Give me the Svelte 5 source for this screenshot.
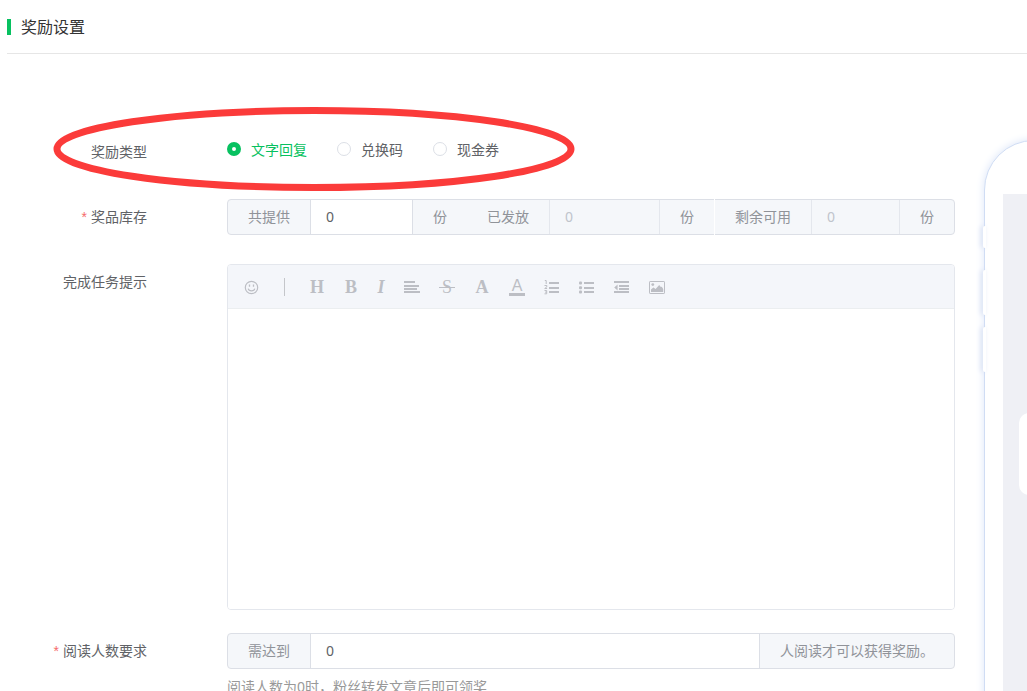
<script>
  let rewardType = $state('text');
  let total = $state('0');
  let readers = $state('0');
  let tip = $state('');
  const sent = '0';
  const left = '0';

  const types = [
    { value: 'text', label: '文字回复' },
    { value: 'code', label: '兑换码' },
    { value: 'cash', label: '现金券' }
  ];
</script>

<div class="page">
  <header class="page-header">
    <h1>奖励设置</h1>
  </header>

  <div class="main">
    <form class="form">
      <div class="row">
        <span class="label" id="type-label">奖励类型</span>
        <div class="radios" role="radiogroup" aria-labelledby="type-label">
          {#each types as t}
            <label class="radio" class:checked={rewardType === t.value}>
              <input type="radio" name="type" value={t.value} bind:group={rewardType} />
              {t.label}
            </label>
          {/each}
        </div>
        <svg class="mark" width="522" height="84" viewBox="0 0 522 84" aria-hidden="true">
          <ellipse cx="261" cy="42" rx="257" ry="38.5" fill="none" stroke="#fb3b3a" stroke-width="7" />
        </svg>
      </div>

      <div class="row">
        <label class="label required" for="total">奖品库存</label>
        <div class="group">
          <span class="addon">共提供</span>
          <input class="total" id="total" type="text" bind:value={total} />
          <span class="addon">份</span>
          <label class="addon" for="sent">已发放</label>
          <input class="sent" id="sent" type="text" value={sent} disabled />
          <span class="addon">份</span>
          <label class="addon split" for="left">剩余可用</label>
          <input class="left" id="left" type="text" value={left} disabled />
          <span class="addon">份</span>
        </div>
      </div>

      <div class="row editor-row">
        <label class="label" for="tip">完成任务提示</label>
        <div class="editor">
          <div class="toolbar">
            <button type="button" aria-label="表情">
              <svg width="16" height="16" viewBox="0 0 16 16" fill="none" stroke="currentColor">
                <circle cx="8.5" cy="8.5" r="6.2" stroke-width="1.2" />
                <path d="M5.2 9.7c.6 2.9 6 2.9 6.6 0" stroke-width="1.1" />
                <path d="M6.5 5.5v2.2M10.5 5.5v2.2" stroke-width="1.3" />
              </svg>
            </button>
            <span class="sep"></span>
            <button type="button" class="serif">H</button>
            <button type="button" class="serif bold">B</button>
            <button type="button" class="serif italic">I</button>
            <button type="button" aria-label="对齐">
              <svg width="16" height="16" viewBox="0 0 16 16" fill="currentColor">
                <path d="M0 2h11v2H0zM0 6h15v2H0zM0 9h13v2H0zM0 12h16v2H0z" />
              </svg>
            </button>
            <button type="button" class="serif strike">S</button>
            <button type="button" class="serif">A</button>
            <button type="button" class="under">A</button>
            <button type="button" aria-label="有序列表">
              <svg width="16" height="16" viewBox="0 0 16 16" fill="currentColor">
                <path d="M5 3h10v2H5zM5 8h10v2H5zM5 12h10v2H5z" />
                <path d="M.8 1.5h1.4V5M.5 6.5h2.3v1.4L.7 9.5h2.4M.5 11.5h2.2v3.3H.5M1 13.1h1.7" fill="none" stroke="currentColor" />
              </svg>
            </button>
            <button type="button" aria-label="无序列表">
              <svg width="16" height="16" viewBox="0 0 16 16" fill="currentColor">
                <path d="M5 3h10v2H5zM5 8h10v2H5zM5 12h10v2H5z" />
                <rect x="0" y="2.4" width="3" height="3" rx="1" />
                <rect x="0" y="7.2" width="3" height="3" rx="1" />
                <rect x="0" y="11.6" width="3" height="3" rx="1" />
              </svg>
            </button>
            <button type="button" aria-label="减少缩进">
              <svg width="16" height="16" viewBox="0 0 16 16" fill="currentColor">
                <path d="M0 2h15v2H0zM5 6h10v2H5zM5 9h10v2H5zM0 12h15v2H0zM3.6 5.5v6L.2 8.5z" />
              </svg>
            </button>
            <button type="button" aria-label="图片">
              <svg width="16" height="16" viewBox="0 0 16 16" fill="currentColor">
                <rect x=".5" y="2.5" width="15" height="12" rx=".6" fill="none" stroke="currentColor" />
                <circle cx="3.8" cy="5.6" r="1.4" />
                <path d="M2 13V10.6l2.4-2 2.2 1.4 3.6-3.9 1.6 2 1-.4 1.4 2.2V13z" />
              </svg>
            </button>
          </div>
          <textarea id="tip" bind:value={tip}></textarea>
        </div>
      </div>

      <div class="row">
        <label class="label required" for="readers">阅读人数要求</label>
        <div>
          <div class="group">
            <span class="addon">需达到</span>
            <input id="readers" type="text" bind:value={readers} />
            <span class="addon">人阅读才可以获得奖励。</span>
          </div>
          <p class="hint">阅读人数为0时，粉丝转发文章后即可领奖</p>
        </div>
      </div>
    </form>

    <aside class="preview">
      <div class="phone">
        <i class="key mute"></i>
        <i class="key up"></i>
        <i class="key down"></i>
        <div class="screen">
          <div class="bubble"></div>
        </div>
      </div>
    </aside>
  </div>
</div>

<style>
:global(body) {
  margin: 0;
  background: #fff;
}
.page {
  height: 100vh;
  overflow: hidden;
  padding-left: 7px;
  box-sizing: border-box;
  font-family: "Noto Sans", "Noto Sans CJK SC", sans-serif;
  font-size: 14px;
  color: #606266;
}
.page-header {
  display: flex;
  align-items: center;
  height: 53px;
  border-bottom: 1px solid #e6e6e6;
}
h1 {
  display: flex;
  align-items: center;
  gap: 10px;
  margin: 0;
  font-size: 16px;
  line-height: 24px;
  font-weight: 400;
  color: #333;
}
h1::before {
  content: "";
  width: 4px;
  height: 16px;
  background: #07c160;
}
.main {
  display: flex;
  padding-top: 80px;
}
.form {
  flex: 1;
  min-width: 0;
  margin-right: 29px;
}
.row {
  position: relative;
  display: grid;
  grid-template-columns: 140px minmax(0, 1fr);
  column-gap: 80px;
  align-items: start;
  margin-bottom: 29px;
}
.editor-row {
  margin-bottom: 23px;
}
.label {
  line-height: 36px;
  text-align: right;
}
.required::before {
  content: "*";
  color: #f56c6c;
  margin-right: 4px;
  font-family: "Liberation Sans", sans-serif;
}
.radios {
  display: flex;
  gap: 30px;
  height: 30px;
}
.radio {
  display: flex;
  align-items: center;
  gap: 10px;
}
.checked {
  color: #07c160;
}
.radio input {
  appearance: none;
  box-sizing: border-box;
  width: 14px;
  height: 14px;
  margin: 0;
  border: 1px solid #dcdfe6;
  border-radius: 50%;
  background: #fff;
}
.radio input:checked {
  border: 5px solid #07c160;
}
.mark {
  position: absolute;
  left: 46px;
  top: -27px;
  pointer-events: none;
}
.group {
  display: flex;
  box-sizing: border-box;
  height: 36px;
  border: 1px solid #dcdfe6;
  border-radius: 4px;
  background: #f5f7fa;
  line-height: 34px;
}
.addon {
  flex: none;
  padding: 0 20px;
  color: #909399;
}
.group input {
  flex: 1 1 0;
  min-width: 0;
  box-sizing: border-box;
  padding: 0 15px;
  border: 0;
  border-left: 1px solid #dcdfe6;
  border-right: 1px solid #dcdfe6;
  border-radius: 0;
  background: #fff;
  color: #606266;
  font: inherit;
  outline: none;
}
.group input:disabled {
  background: #f5f7fa;
  border-color: #e4e7ed;
  color: #c0c4cc;
}
.group .total {
  flex-basis: 103px;
}
.group .sent {
  flex-basis: 111px;
}
.group .left {
  flex-basis: 89px;
}
.split {
  margin: -1px 0;
  border-left: 1px solid #fff;
  line-height: 36px;
  border-top: 0;
}
.editor {
  border: 1px solid #e4e7ed;
  border-radius: 4px;
  overflow: hidden;
}
.toolbar {
  display: flex;
  align-items: center;
  gap: 19px;
  height: 43px;
  padding: 0 15px;
  border-bottom: 1px solid #ebeef0;
  background: #f4f6fa;
}
.toolbar button {
  position: relative;
  display: flex;
  flex: none;
  align-items: center;
  justify-content: center;
  width: 16px;
  height: 20px;
  padding: 0;
  border: 0;
  background: none;
  color: #bcbec4;
  cursor: pointer;
}
.toolbar svg {
  flex: none;
}
.toolbar .serif {
  font: bold 18px/20px "Liberation Serif", serif;
}
.toolbar .bold {
  width: 14px;
}
.toolbar .italic {
  width: 8px;
  font-style: italic;
}
.toolbar .strike {
  font-weight: 400;
}
.strike::after {
  content: "";
  position: absolute;
  left: 0;
  right: 0;
  top: 10px;
  height: 1px;
  background: currentColor;
}
.toolbar .under {
  align-items: flex-start;
  font: 16px/18px "Liberation Sans", sans-serif;
}
.under::after {
  content: "";
  position: absolute;
  left: 0;
  right: 0;
  bottom: 1px;
  height: 3px;
  background: currentColor;
}
.sep {
  flex: none;
  width: 1px;
  height: 18px;
  margin: 0 5px 0 6px;
  background: #c4c6ca;
}
textarea {
  display: block;
  box-sizing: border-box;
  width: 100%;
  height: 300px;
  padding: 10px 15px;
  border: 0;
  outline: none;
  resize: none;
  font: inherit;
}
.hint {
  margin: 0;
  padding-top: 8px;
  line-height: 20px;
  color: #999;
}
.preview {
  flex: 0 0 43px;
  min-width: 0;
}
.phone {
  position: relative;
  box-sizing: border-box;
  width: 340px;
  height: 680px;
  margin-top: 6px;
  padding: 53px 18px;
  border: 1px solid #d0ddf4;
  border-radius: 50px;
  background: #fff;
  box-shadow: 0 0 8px #dbe5f8;
}
.key {
  position: absolute;
  left: -2px;
  width: 3px;
  height: 45px;
  border-radius: 2px 0 0 2px;
  background: #fff;
  box-shadow: -2px 0 5px #d0daf0;
}
.mute {
  top: 85px;
  height: 22px;
}
.up {
  top: 129px;
}
.down {
  top: 186px;
}
.screen {
  box-sizing: border-box;
  height: 100%;
  padding: 219px 16px 0;
  background: #eff0f5;
}
.bubble {
  height: 82px;
  border-radius: 10px;
  background: #fff;
}
</style>
